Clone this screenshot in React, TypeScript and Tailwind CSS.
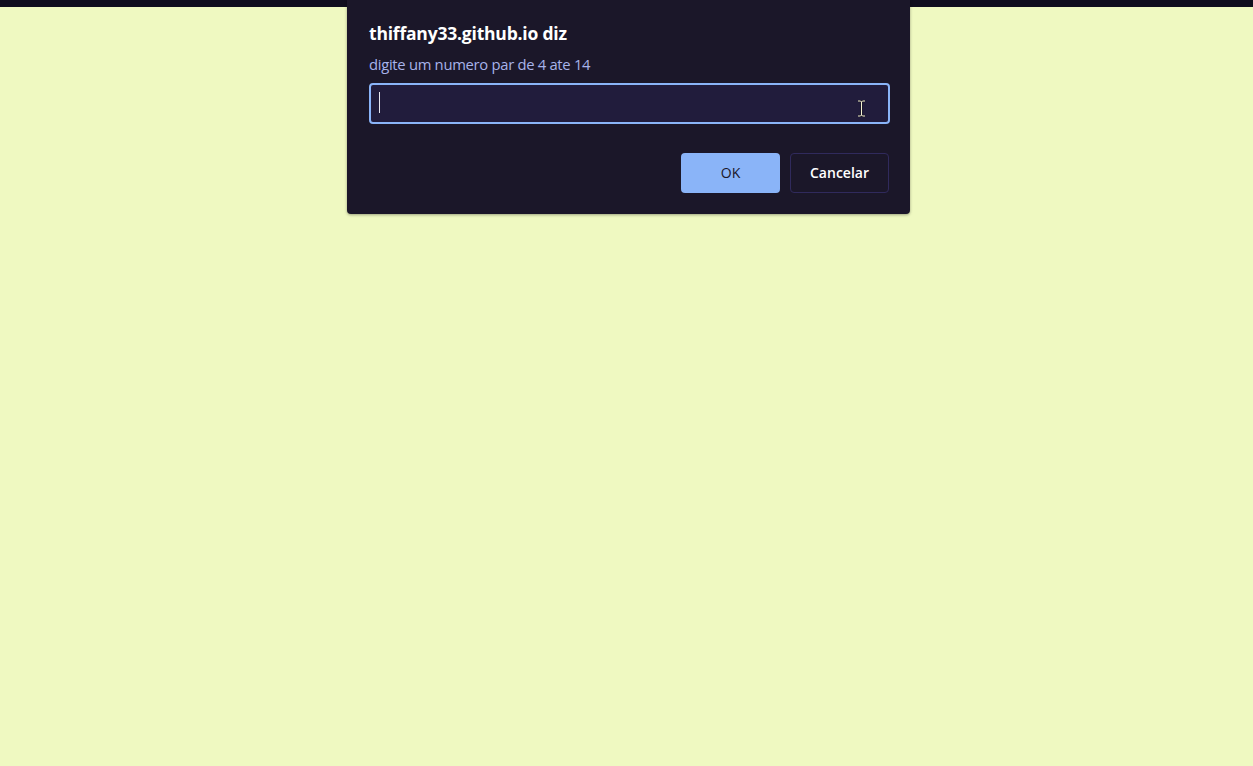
import React from "react";

function IBeam() {
  return (
    <svg width="9" height="17" viewBox="0 0 9 17" className="absolute right-[22px] top-[15px]">
      <path d="M1 1h2.5L4.5 2 5.5 1H8M4.5 2v13M1 16h2.5L4.5 15l1 1H8" fill="none" stroke="#1b1729" strokeWidth="2.4" />
      <path d="M1 1h2.5L4.5 2 5.5 1H8M4.5 2v13M1 16h2.5L4.5 15l1 1H8" fill="none" stroke="#f4f1d0" strokeWidth="1" />
    </svg>
  );
}

export default function App() {
  return (
    <div className="relative min-h-screen bg-[#eff9c1] font-['Open_Sans','Noto_Sans',sans-serif]">
      <div className="h-[7px] bg-[#100e1e]" />

      <div className="absolute left-[347px] top-0 w-[563px] rounded-b-[4px] bg-[#1b1729] pb-[21px] pl-[22px] pr-[20px] pt-[20px] shadow-[0_1px_3px_rgba(0,0,0,0.35)]">
        <h1 className="text-[17.5px] font-bold leading-[26px] tracking-[-0.2px] text-white">thiffany33.github.io diz</h1>
        <p className="mt-[8px] text-[14.8px] leading-[20px] tracking-[-0.3px] text-[#a7b3ea]">digite um numero par de 4 ate 14</p>

        <div className="relative mt-[9px] h-[41px] rounded-[4px] border-2 border-[#8ab4f8] bg-[#211c3c]">
          <div className="absolute left-[8px] top-[7px] h-[21px] w-px bg-[#e8e8f0]" />
          <IBeam />
        </div>

        <div className="mt-[29px] flex justify-end gap-[10px] pr-[1px]">
          <button className="h-[40px] w-[99px] rounded-[4px] bg-[#8ab4f8] pb-[2px] text-[14px] text-[#1b1729]">OK</button>
          <button className="h-[40px] w-[99px] rounded-[4px] border border-[#302a5c] pb-[2px] text-[14px] font-semibold text-white">Cancelar</button>
        </div>
      </div>
    </div>
  );
}
